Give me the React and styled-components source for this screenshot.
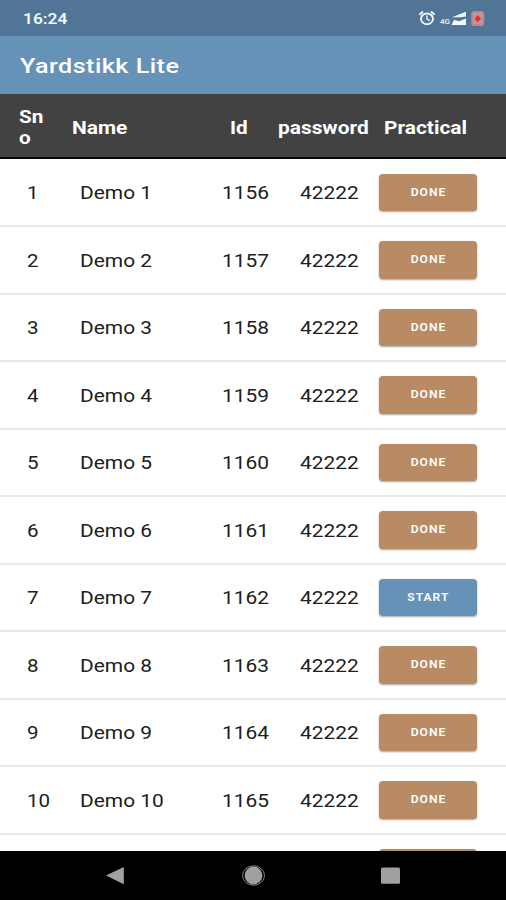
import React from 'react'
import styled, { createGlobalStyle } from 'styled-components';

const GlobalStyle = createGlobalStyle`
  * {
    box-sizing: border-box;
  }

  body {
    margin: 0;
    background-color: #fff;
    font-family: Roboto, "Liberation Sans", sans-serif;
  }
`;

const Screen = styled.div`
  display: flex;
  flex-direction: column;
  width: 506px;
  height: 900px;
  overflow: hidden;
  background-color: #fff;
`;

const StatusBar = styled.div`
  flex: none;
  display: flex;
  align-items: center;
  justify-content: space-between;
  height: 35.5px;
  padding: 2px 20px 0 23px;
  background-color: #517596;
  color: #f4f8fb;
  font-size: 15.5px;
  font-weight: 600;
`;

const StatusIcons = styled.div`
  display: flex;
  align-items: center;

  svg {
    display: block;
  }
`;

const AppBar = styled.div`
  flex: none;
  display: flex;
  align-items: center;
  height: 58px;
  padding: 2px 20px 0;
  background-color: #6792b8;
  color: #fff;
  font-size: 21px;
  font-weight: 500;
  letter-spacing: 0.4px;
`;

// the type is wider than Roboto's normal cut
const Wide = styled.span`
  display: inline-block;
  white-space: nowrap;
  transform: scaleX(${(props) => props.$by || 1.15});
  transform-origin: left center;
`;

const TableHead = styled.div`
  flex: none;
  display: grid;
  grid-template-columns: 53px 158px 48px 106px 1fr;
  align-items: center;
  height: 65px;
  padding: 4px 0 0 19px;
  background-color: #424242;
  border-bottom: 2px solid #080808;
  color: #fff;
  font-size: 18px;
  font-weight: 700;
  line-height: 21px;
`;

const TableBody = styled.div`
  flex: 1;
  min-height: 0;
  padding-top: 1px;
  overflow: hidden;
`;

const Row = styled.div`
  display: grid;
  grid-template-columns: 53px 142px 78px 79px 1fr;
  align-items: center;
  height: 67.5px;
  padding: 0 0 0 26.5px;
  border-bottom: 2px solid #e8e8e8;
  color: #202020;
  font-size: 18.5px;

  > ${Wide} {
    padding-top: 2px;
  }
`;

const Button = styled.button`
  display: flex;
  align-items: center;
  justify-content: center;
  width: 98px;
  height: 37.5px;
  padding: 0 0 0 1px;
  margin-left: 0.5px;
  border: none;
  border-radius: 4px;
  background-color: ${(props) => (props.$start ? '#6792b8' : '#b88b65')};
  box-shadow: 0 1px 2px rgba(0, 0, 0, 0.35);
  color: #fff;
  font-family: inherit;
  font-size: 10.5px;
  font-weight: 600;
  letter-spacing: 0.9px;

  ${Wide} {
    transform-origin: center;
  }
`;

const NavBar = styled.div`
  flex: none;
  display: flex;
  align-items: center;
  height: 49px;
  padding: 0 0 1px 105px;
  background-color: #000;

  svg {
    display: block;
  }
`;

const rows = Array.from({ length: 11 }, (_, i) => ({
    sno: i + 1,
    name: `Demo ${i + 1}`,
    id: 1156 + i,
    password: '42222',
    started: i !== 6,
}));

const StatusGlyphs = () => (
    <StatusIcons>
      <svg width="68" height="18" viewBox="0 0 68 18">
        {/* alarm */}
        <ellipse cx="9" cy="8.8" rx="6" ry="5.4" fill="none" stroke="#eef4f8" strokeWidth="2" />
        <path d="M1.4 4.8 5 1.6M16.6 4.8 13 1.6" stroke="#eef4f8" strokeWidth="2" />
        <path d="M9 5.5v3.7l2.8 1.5" fill="none" stroke="#eef4f8" strokeWidth="1.4" />
        <text x="22" y="13.5" fill="#e4ecf2" fontSize="6.5" fontWeight="600" textLength="10" lengthAdjust="spacingAndGlyphs">4G</text>
        {/* two sim signals */}
        <path d="M34 7.3 48 1.8v4.6l-6 .9z" fill="#f4f8fb" />
        <path d="M33.5 15 36 9.8l5 1.4 7-2.8V15z" fill="#f4f8fb" />
        {/* low battery */}
        <rect x="54" y="1.8" width="11.5" height="13.4" rx="2" fill="#a79fa9" stroke="#e7776f" strokeWidth="1.5" />
        <path d="M59.8 5 63 8.4l-2.2 3h-2.1l-2.1-3z" fill="#f02b2f" />
      </svg>
    </StatusIcons>
);

const App = () => {
    return (
        <>
          <GlobalStyle />
          <Screen>
            <StatusBar>
                <Wide $by={1.12}>16:24</Wide>
                <StatusGlyphs />
            </StatusBar>

            <AppBar>
                <Wide $by={1.195}>Yardstikk Lite</Wide>
            </AppBar>

            <TableHead>
                <Wide>Sn<br />o</Wide>
                <Wide $by={1.16}>Name</Wide>
                <Wide>Id</Wide>
                <Wide $by={1.16}>password</Wide>
                <Wide $by={1.16}>Practical</Wide>
            </TableHead>

            <TableBody>
                {rows.map((row) => (
                    <Row key={row.sno}>
                      <Wide $by={1.11}>{row.sno}</Wide>
                      <Wide $by={1.13}>{row.name}</Wide>
                      <Wide $by={1.13}>{row.id}</Wide>
                      <Wide $by={1.13}>{row.password}</Wide>
                      <Button $start={!row.started}>
                        <Wide>{row.started ? 'DONE' : 'START'}</Wide>
                      </Button>
                    </Row>
                ))}
            </TableBody>

            <NavBar>
                <svg width="305" height="24" viewBox="0 0 305 24">
                  <path d="M1 12.5 18.8 4v17.3z" fill="#a0a0a0" />
                  <circle cx="148.5" cy="12.5" r="8.9" fill="#a0a0a0" />
                  <ellipse cx="148.5" cy="12.5" rx="11" ry="9.7" fill="none" stroke="#858585" strokeWidth="1" />
                  <rect x="276" y="4.4" width="19" height="16.4" rx="1.5" fill="#a0a0a0" />
                </svg>
            </NavBar>
          </Screen>
        </>
      );
}

export default App
